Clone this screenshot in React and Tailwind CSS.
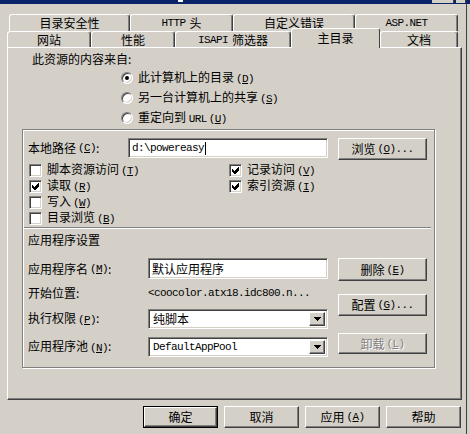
import React from "react";

const mono = "font-['Liberation_Mono',monospace] text-[11px] tracking-[-0.6px]";
const raised =
  "border border-t-white border-l-white border-r-[#404040] border-b-[#404040] shadow-[inset_-1px_-1px_0_#808080]";
const sunken =
  "bg-white border border-t-[#808080] border-l-[#808080] border-r-white border-b-white shadow-[inset_1px_1px_0_#404040,inset_-1px_-1px_0_#d4d0c8]";

function Mn({ ch }) {
  return (
    <span className={`${mono} ml-[2px]`}>
      (<u>{ch}</u>)
    </span>
  );
}

function Btn({ children, className = "", disabled }) {
  return (
    <div
      className={`flex items-center justify-center shrink-0 bg-[#d4d0c8] ${raised} ${className} ${
        disabled ? "text-[#808080] [text-shadow:1px_1px_0_#ffffff]" : ""
      }`}
    >
      {children}
    </div>
  );
}

function Check({ checked }) {
  return (
    <div
      className={`w-[13px] h-[13px] shrink-0 flex items-center justify-center ${sunken}`}
    >
      {checked && (
        <svg width="7" height="7" viewBox="0 0 7 7" shapeRendering="crispEdges">
          <polygon points="0,2 2,4 6,0 7,0 7,3 3,7 2,7 0,5" fill="#000" />
        </svg>
      )}
    </div>
  );
}

function Radio({ checked }) {
  return (
    <div className="w-[12px] h-[12px] shrink-0 rounded-full bg-white border border-t-[#808080] border-l-[#808080] border-r-white border-b-white shadow-[inset_1px_1px_0_#404040,inset_-1px_-1px_0_#d4d0c8] flex items-center justify-center">
      {checked && <div className="w-[4px] h-[4px] rounded-full bg-black" />}
    </div>
  );
}

function Select({ children, className = "" }) {
  return (
    <div className={`flex items-stretch p-[2px] ${sunken} ${className}`}>
      <div className={`flex-1 flex items-center pl-[2px] ${mono}`}>{children}</div>
      <div className={`w-[16px] flex items-center justify-center bg-[#d4d0c8] ${raised}`}>
        <svg width="7" height="4" viewBox="0 0 7 4" shapeRendering="crispEdges">
          <polygon points="0,0 7,0 3.5,4" fill="#000" />
        </svg>
      </div>
    </div>
  );
}

function Tab({ children, className = "" }) {
  return (
    <div
      className={`shrink-0 flex items-center justify-center bg-[#d4d0c8] border-t border-l border-t-white border-l-white border-r border-r-[#404040] rounded-t-[3px] shadow-[inset_-1px_0_0_#808080] ${className}`}
    >
      {children}
    </div>
  );
}

export default function App() {
  return (
    <div className="w-[470px] h-[434px] bg-[#d4d0c8] overflow-hidden relative flex flex-col font-['Noto_Sans_CJK_SC',sans-serif] text-[12px] leading-[14px] text-black">
      {/* title bar remnant */}
      <div className="h-[4px] shrink-0 bg-[#0a246a] flex items-start">
        <div className="ml-[178px] w-[5px] h-[2px] bg-white" />
        <div className="ml-auto w-[22px] h-[3px] bg-[#d4d0c8] border-r border-r-[#404040]" />
        <div className="ml-[2px] w-[10px] h-[3px] bg-[#d4d0c8] border-r border-r-[#404040]" />
        <div className="w-[4px]" />
      </div>

      <div className="flex flex-1">
        <div className="w-[466px] flex flex-col">
          {/* tabs row 1 */}
          <div className="mt-[10px] h-[17px] flex pl-[9px]">
            <Tab className="w-[121px] h-[17px]">目录安全性</Tab>
            <Tab className="w-[103px] h-[17px]">
              <span className={`${mono} mr-[4px]`}>HTTP</span>头
            </Tab>
            <Tab className="w-[122px] h-[17px]">自定义错误</Tab>
            <Tab className="w-[103px] h-[17px]">
              <span className={mono}>ASP.NET</span>
            </Tab>
          </div>
          {/* tabs row 2 */}
          <div className="h-[16px] flex items-start pl-[7px]">
            <Tab className="w-[84px] h-[16px]">网站</Tab>
            <Tab className="w-[84px] h-[16px]">性能</Tab>
            <Tab className="w-[116px] h-[16px]">
              <span className={`${mono} mr-[4px]`}>ISAPI</span>筛选器
            </Tab>
            <Tab className="w-[89px] h-[20px] -mt-[3px] relative z-10 pb-[2px] shadow-none border-r-[#404040]">
              主目录
            </Tab>
            <Tab className="w-[78px] h-[16px]">文档</Tab>
          </div>

          {/* panel */}
          <div className="ml-[7px] w-[455px] h-[353px] shrink-0 flex flex-col border border-t-white border-l-white border-r-[#404040] border-b-[#404040] shadow-[inset_-1px_-1px_0_#808080]">
            <div className="mt-[4px] ml-[24px] h-[14px]">此资源的内容来自:</div>
            <div className="mt-[2px] ml-[113px] flex flex-col">
              <div className="h-[20px] flex items-center gap-[5px]">
                <Radio checked />
                <span>
                  此计算机上的目录<Mn ch="D" />
                </span>
              </div>
              <div className="h-[20px] flex items-center gap-[5px]">
                <Radio />
                <span>
                  另一台计算机上的共享<Mn ch="S" />
                </span>
              </div>
              <div className="h-[20px] flex items-center gap-[5px]">
                <Radio />
                <span>
                  重定向到 <span className={mono}>URL</span>
                  <Mn ch="U" />
                </span>
              </div>
            </div>

            {/* group box */}
            <div className="mt-[1px] ml-[14px] w-[413px] h-[239px] shrink-0 flex flex-col border border-[#808080] shadow-[inset_1px_1px_0_#ffffff,1px_1px_0_#ffffff]">
              <div className="mt-[8px] flex items-start">
                <div className="w-[105px] pl-[5px] h-[20px] flex items-center">
                  本地路径<Mn ch="C" />:
                </div>
                <div className={`w-[200px] h-[20px] flex items-center pl-[3px] ${sunken} ${mono}`}>
                  d:\powereasy<span className="w-[1px] h-[13px] bg-black ml-[1px]" />
                </div>
                <Btn className="ml-[10px] w-[89px] h-[22px]">
                  浏览<Mn ch="O" />
                  <span className={mono}>...</span>
                </Btn>
              </div>

              <div className="mt-[2px] flex pl-[6px]">
                <div className="w-[200px] flex flex-col">
                  <div className="h-[16px] flex items-center gap-[5px]">
                    <Check />
                    <span>
                      脚本资源访问<Mn ch="T" />
                    </span>
                  </div>
                  <div className="h-[16px] flex items-center gap-[5px]">
                    <Check checked />
                    <span>
                      读取<Mn ch="R" />
                    </span>
                  </div>
                  <div className="h-[16px] flex items-center gap-[5px]">
                    <Check />
                    <span>
                      写入<Mn ch="W" />
                    </span>
                  </div>
                  <div className="h-[16px] flex items-center gap-[5px]">
                    <Check />
                    <span>
                      目录浏览<Mn ch="B" />
                    </span>
                  </div>
                </div>
                <div className="flex flex-col">
                  <div className="h-[16px] flex items-center gap-[5px]">
                    <Check checked />
                    <span>
                      记录访问<Mn ch="V" />
                    </span>
                  </div>
                  <div className="h-[16px] flex items-center gap-[5px]">
                    <Check checked />
                    <span>
                      索引资源<Mn ch="I" />
                    </span>
                  </div>
                </div>
              </div>

              <div className="mt-[1px] ml-[1px] w-[407px] h-[2px] border-t border-t-[#808080] border-b border-b-white" />

              <div className="mt-[4px] pl-[5px] h-[14px]">应用程序设置</div>

              <div className="mt-[11px] flex">
                <div className="w-[305px] flex flex-col pl-[5px]">
                  <div className="h-[22px] flex items-start">
                    <div className="w-[120px] h-[21px] flex items-center">
                      应用程序名<Mn ch="M" />:
                    </div>
                    <div className={`w-[180px] h-[21px] flex items-center pl-[3px] ${sunken}`}>
                      默认应用程序
                    </div>
                  </div>
                  <div className="mt-[6px] h-[14px] flex items-center">
                    <div className="w-[120px]">开始位置:</div>
                    <div className={mono}>&lt;coocolor.atx18.idc800.n...</div>
                  </div>
                  <div className="mt-[9px] h-[20px] flex items-center">
                    <div className="w-[120px]">
                      执行权限<Mn ch="P" />:
                    </div>
                    <Select className="w-[180px] h-[20px]">
                      <span className="font-['Noto_Sans_CJK_SC',sans-serif] text-[12px] tracking-normal">纯脚本</span>
                    </Select>
                  </div>
                  <div className="mt-[8px] h-[20px] flex items-center">
                    <div className="w-[120px]">
                      应用程序池<Mn ch="N" />:
                    </div>
                    <Select className="w-[180px] h-[20px]">DefaultAppPool</Select>
                  </div>
                </div>
                <div className="ml-[10px] flex flex-col">
                  <Btn className="w-[89px] h-[23px]">
                    删除<Mn ch="E" />
                  </Btn>
                  <Btn className="mt-[13px] w-[89px] h-[22px]">
                    配置<Mn ch="G" />
                    <span className={mono}>...</span>
                  </Btn>
                  <Btn disabled className="mt-[17px] w-[89px] h-[21px]">
                    卸载<Mn ch="L" />
                  </Btn>
                </div>
              </div>
            </div>
          </div>

          {/* bottom buttons */}
          <div className="mt-[6px] flex pl-[143px] gap-[6px]">
            <div className="w-[75px] h-[22px] border border-black flex">
              <Btn className="flex-1">确定</Btn>
            </div>
            <Btn className="w-[75px] h-[22px]">取消</Btn>
            <Btn className="w-[75px] h-[22px]">
              应用<Mn ch="A" />
            </Btn>
            <Btn className="w-[75px] h-[22px]">帮助</Btn>
          </div>
        </div>
        <div className="flex-1 border-l border-l-[#404040]" />
      </div>
    </div>
  );
}
